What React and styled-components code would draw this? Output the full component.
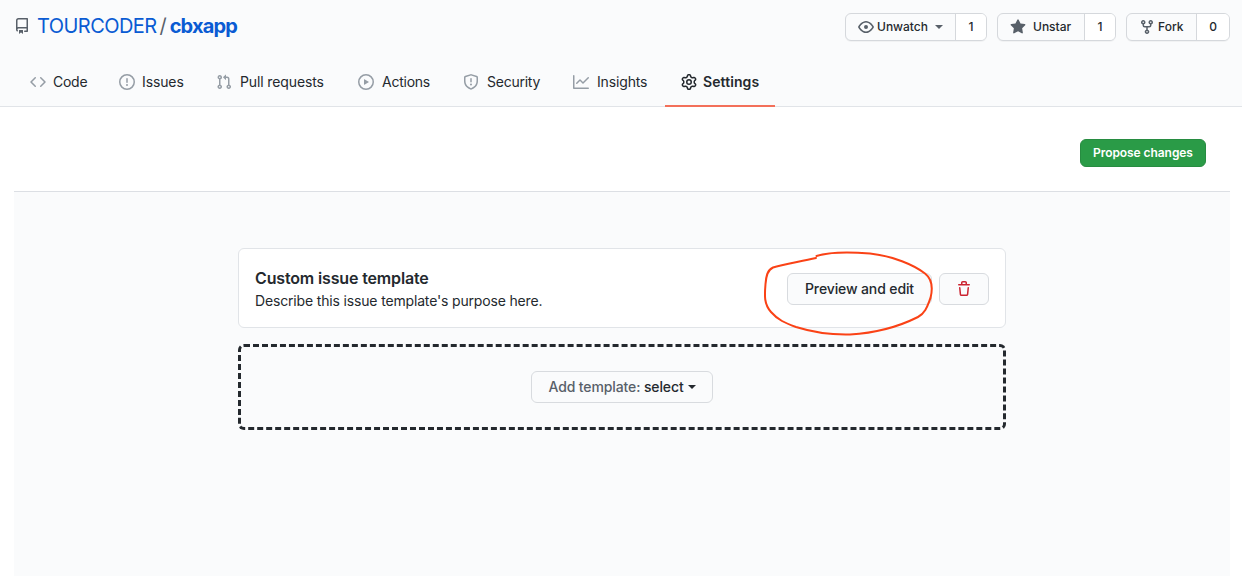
import React from "react";
import styled, { createGlobalStyle } from "styled-components";

const GlobalStyle = createGlobalStyle`
  *, *::before, *::after { box-sizing: border-box; }
  html, body { margin: 0; padding: 0; background: #fff; }
  body {
    font-family: Inter, "Liberation Sans", sans-serif;
    font-size: 14px;
    line-height: 20px;
    color: #24292e;
    overflow: hidden;
  }
  button { font-family: inherit; margin: 0; }
`;

const PATHS = {
  repo: "M2 2.5A2.5 2.5 0 014.5 0h8.75a.75.75 0 01.75.75v12.5a.75.75 0 01-.75.75h-2.5a.75.75 0 110-1.5h1.75v-2h-8a1 1 0 00-.714 1.7.75.75 0 01-1.072 1.05A2.495 2.495 0 012 11.5v-9zm10.5-1V9h-8c-.356 0-.694.074-1 .208V2.5a1 1 0 011-1h8zM5 12.25v3.25a.25.25 0 00.4.2l1.45-1.087a.25.25 0 01.3 0L8.6 15.7a.25.25 0 00.4-.2v-3.25a.25.25 0 00-.25-.25h-3.5a.25.25 0 00-.25.25z",
  code: "M4.72 3.22a.75.75 0 011.06 1.06L2.06 8l3.72 3.72a.75.75 0 11-1.06 1.06L.47 8.53a.75.75 0 010-1.06l4.25-4.25zm6.56 0a.75.75 0 10-1.06 1.06L13.94 8l-3.72 3.72a.75.75 0 101.06 1.06l4.25-4.25a.75.75 0 000-1.06l-4.25-4.25z",
  issue: "M8 1.5a6.5 6.5 0 100 13 6.5 6.5 0 000-13zM0 8a8 8 0 1116 0A8 8 0 010 8zm9 3a1 1 0 11-2 0 1 1 0 012 0zm-.25-6.25a.75.75 0 00-1.5 0v3.5a.75.75 0 001.5 0v-3.5z",
  pull: "M7.177 3.073L9.573.677A.25.25 0 0110 .854v4.792a.25.25 0 01-.427.177L7.177 3.427a.25.25 0 010-.354zM3.75 2.5a.75.75 0 100 1.5.75.75 0 000-1.5zm-2.25.75a2.25 2.25 0 113 2.122v5.256a2.251 2.251 0 11-1.5 0V5.372A2.25 2.25 0 011.5 3.25zM11 2.5h-1V4h1a1 1 0 011 1v5.628a2.251 2.251 0 101.5 0V5A2.5 2.5 0 0011 2.5zm1 10.25a.75.75 0 111.5 0 .75.75 0 01-1.5 0zM3.75 12a.75.75 0 100 1.5.75.75 0 000-1.5z",
  play: "M1.5 8a6.5 6.5 0 1113 0 6.5 6.5 0 01-13 0zM8 0a8 8 0 100 16A8 8 0 008 0zM6.379 5.227A.25.25 0 006 5.442v5.117a.25.25 0 00.379.214l4.264-2.559a.25.25 0 000-.428L6.379 5.227z",
  shield: "M7.467.133a1.75 1.75 0 011.066 0l5.25 1.68A1.75 1.75 0 0115 3.48V7c0 1.566-.32 3.182-1.303 4.682-.983 1.498-2.585 2.813-5.032 3.855a1.7 1.7 0 01-1.33 0c-2.447-1.042-4.049-2.357-5.032-3.855C1.32 10.182 1 8.566 1 7V3.48a1.75 1.75 0 011.217-1.667l5.25-1.68zm.61 1.429a.25.25 0 00-.153 0l-5.25 1.68a.25.25 0 00-.174.238V7c0 1.358.275 2.666 1.057 3.86.784 1.194 2.121 2.34 4.366 3.297a.2.2 0 00.154 0c2.245-.956 3.582-2.104 4.366-3.298C13.225 9.666 13.5 8.36 13.5 7V3.48a.25.25 0 00-.174-.237l-5.25-1.68zM9 10.5a1 1 0 11-2 0 1 1 0 012 0zM7.25 4.75a.75.75 0 011.5 0v3a.75.75 0 01-1.5 0z",
  graph: "M1.5 1.75a.75.75 0 00-1.5 0v12.5c0 .414.336.75.75.75h14.5a.75.75 0 000-1.5H1.5V1.75zm14.28 2.53a.75.75 0 00-1.06-1.06L10 7.94 7.53 5.47a.75.75 0 00-1.06 0L3.22 8.72a.75.75 0 001.06 1.06L7 7.06l2.47 2.47a.75.75 0 001.06 0l5.25-5.25z",
  gear: "M7.429 1.525a6.593 6.593 0 011.142 0c.036.003.108.036.137.146l.289 1.105c.147.56.55.967.997 1.189.174.086.341.183.501.29.417.278.97.423 1.53.27l1.102-.303c.11-.03.175.016.195.046.219.31.41.641.573.989.014.031.022.11-.059.19l-.815.806c-.411.406-.562.957-.53 1.456a4.588 4.588 0 010 .582c-.032.499.119 1.05.53 1.456l.815.806c.08.08.073.159.059.19a6.494 6.494 0 01-.573.99c-.02.029-.086.074-.195.045l-1.103-.303c-.559-.153-1.112-.008-1.529.27-.16.107-.327.204-.5.29-.449.222-.851.628-.998 1.189l-.289 1.105c-.029.11-.101.143-.137.146a6.613 6.613 0 01-1.142 0c-.036-.003-.108-.037-.137-.146l-.289-1.105c-.147-.56-.55-.967-.997-1.189a4.502 4.502 0 01-.501-.29c-.417-.278-.97-.423-1.53-.27l-1.102.303c-.11.03-.175-.016-.195-.046a6.492 6.492 0 01-.573-.989c-.014-.031-.022-.11.059-.19l.815-.806c.411-.406.562-.957.53-1.456a4.587 4.587 0 010-.582c.032-.499-.119-1.05-.53-1.456l-.815-.806c-.08-.08-.073-.159-.059-.19a6.44 6.44 0 01.573-.99c.02-.029.086-.075.195-.045l1.103.303c.559.153 1.112.008 1.529-.27.16-.107.327-.204.5-.29.449-.222.851-.628.998-1.189l.289-1.105c.029-.11.101-.143.137-.146zM8 0c-.236 0-.47.01-.701.03-.743.065-1.29.615-1.458 1.261l-.29 1.106c-.017.066-.078.158-.211.224a5.994 5.994 0 00-.668.386c-.123.082-.233.09-.3.071L3.27 2.776c-.644-.177-1.392.02-1.82.63a7.977 7.977 0 00-.704 1.217c-.315.675-.111 1.422.363 1.891l.815.806c.05.048.098.147.088.294a6.084 6.084 0 000 .772c.01.147-.038.246-.088.294l-.815.806c-.474.469-.678 1.216-.363 1.891.2.428.436.835.704 1.218.428.609 1.176.806 1.82.63l1.103-.303c.066-.019.176-.011.299.071.213.143.436.272.668.386.133.066.194.158.212.224l.289 1.106c.169.646.715 1.196 1.458 1.26a8.094 8.094 0 001.402 0c.743-.064 1.29-.614 1.458-1.26l.29-1.106c.017-.066.078-.158.211-.224a5.98 5.98 0 00.668-.386c.123-.082.233-.09.3-.071l1.102.302c.644.177 1.392-.02 1.82-.63.268-.382.505-.789.704-1.217.315-.675.111-1.422-.364-1.891l-.814-.806c-.05-.048-.098-.147-.088-.294a6.1 6.1 0 000-.772c-.01-.147.039-.246.088-.294l.814-.806c.475-.469.679-1.216.364-1.891a7.992 7.992 0 00-.704-1.218c-.428-.609-1.176-.806-1.82-.63l-1.103.303c-.066.019-.176.011-.299-.071a5.991 5.991 0 00-.668-.386c-.133-.066-.194-.158-.212-.224L10.16 1.29C9.99.645 9.444.095 8.701.031A8.094 8.094 0 008 0zm1.5 8a1.5 1.5 0 11-3 0 1.5 1.5 0 013 0zM11 8a3 3 0 11-6 0 3 3 0 016 0z",
  eye: "M1.679 7.932c.412-.621 1.242-1.75 2.366-2.717C5.175 4.242 6.527 3.5 8 3.5c1.473 0 2.824.742 3.955 1.715 1.124.967 1.954 2.096 2.366 2.717a.119.119 0 010 .136c-.412.621-1.242 1.75-2.366 2.717C10.825 11.758 9.473 12.5 8 12.5c-1.473 0-2.824-.742-3.955-1.715C2.92 9.818 2.09 8.69 1.679 8.068a.119.119 0 010-.136zM8 2c-1.981 0-3.67.992-4.933 2.078C1.797 5.169.88 6.423.43 7.1a1.619 1.619 0 000 1.798c.45.678 1.367 1.932 2.637 3.024C4.329 13.008 6.019 14 8 14c1.981 0 3.67-.992 4.933-2.078 1.27-1.091 2.187-2.345 2.637-3.023a1.619 1.619 0 000-1.798c-.45-.678-1.367-1.932-2.637-3.023C11.671 2.992 9.981 2 8 2zm0 8a2 2 0 100-4 2 2 0 000 4z",
  star: "M8 .25a.75.75 0 01.673.418l1.882 3.815 4.21.612a.75.75 0 01.416 1.279l-3.046 2.97.719 4.192a.75.75 0 01-1.088.791L8 12.347l-3.766 1.98a.75.75 0 01-1.088-.79l.72-4.194L.818 6.374a.75.75 0 01.416-1.28l4.21-.611L7.327.668A.75.75 0 018 .25z",
  fork: "M5 3.25a.75.75 0 11-1.5 0 .75.75 0 011.5 0zm0 2.122a2.25 2.25 0 10-1.5 0v.878A2.25 2.25 0 005.75 8.5h1.5v2.128a2.251 2.251 0 101.5 0V8.5h1.5a2.25 2.25 0 002.25-2.25v-.878a2.25 2.25 0 10-1.5 0v.878a.75.75 0 01-.75.75h-4.5A.75.75 0 015 6.25v-.878zm3.75 7.378a.75.75 0 11-1.5 0 .75.75 0 011.5 0zm3-8.75a.75.75 0 100-1.5.75.75 0 000 1.5z",
  trash: "M6.5 1.75a.25.25 0 01.25-.25h2.5a.25.25 0 01.25.25V3h-3V1.75zm4.5 0V3h2.25a.75.75 0 010 1.5H2.75a.75.75 0 010-1.5H5V1.75C5 .784 5.784 0 6.75 0h2.5C10.216 0 11 .784 11 1.75zM4.496 6.675a.75.75 0 10-1.492.15l.66 6.6A1.75 1.75 0 005.405 15h5.19c.9 0 1.652-.681 1.741-1.576l.66-6.6a.75.75 0 00-1.492-.149l-.66 6.6a.25.25 0 01-.249.225h-5.19a.25.25 0 01-.249-.225l-.66-6.6z",
};

const IconSvg = styled.svg`
  display: block;
  flex: none;
  width: ${(p) => p.$size}px;
  height: ${(p) => p.$size}px;
  fill: ${(p) => p.$color};
`;

const Icon = ({ name, size = 16, color = "#586069" }) => (
  <IconSvg viewBox="0 0 16 16" $size={size} $color={color} aria-hidden="true">
    <path fillRule="evenodd" d={PATHS[name]} />
  </IconSvg>
);

const Page = styled.div`
  display: flex;
  flex-direction: column;
  width: 1242px;
  height: 576px;
  overflow: hidden;
`;

const Header = styled.header`
  flex: none;
  display: flex;
  flex-direction: column;
  justify-content: space-between;
  height: 107px;
  background: #fafbfc;
  border-bottom: 1px solid #e1e4e8;
`;

const TitleBar = styled.div`
  display: flex;
  justify-content: space-between;
  align-items: flex-start;
  padding: 13px 12px 0 14px;
`;

const RepoTitle = styled.h1`
  display: flex;
  align-items: center;
  height: 26px;
  margin: 0;
  font-size: 20px;
  line-height: 26px;
  font-weight: 400;
`;

const Owner = styled.a`
  margin-left: 7px;
  color: #0a5bd3;
  letter-spacing: -0.55px;
`;

const Slash = styled.span`
  width: 13px;
  text-align: center;
  color: #586069;
`;

const RepoName = styled.a`
  color: #0a5bd3;
  font-weight: 700;
  letter-spacing: -0.85px;
`;

const Actions = styled.div`
  display: flex;
  gap: 10px;
`;

const SplitButton = styled.div`
  display: flex;
  height: 28px;
  border: 1px solid #d5d8dc;
  border-radius: 6px;
  overflow: hidden;
  background: #fafbfc;
  font-size: 12px;
  font-weight: 500;
  box-shadow: 0 1px 0 rgba(27, 31, 35, 0.04);
`;

const ActionMain = styled.div`
  display: flex;
  align-items: center;
  width: ${(p) => p.$width}px;
  padding-left: 12px;
  gap: ${(p) => p.$gap}px;
`;

const Count = styled.div`
  display: flex;
  align-items: center;
  justify-content: center;
  width: ${(p) => p.$width}px;
  border-left: 1px solid #d5d8dc;
  background: #fff;
`;

const Caret = styled.span`
  width: 0;
  height: 0;
  margin-left: ${(p) => p.$offset}px;
  border: 4px solid transparent;
  border-bottom-width: 0;
  border-top-color: ${(p) => p.$color};
`;

const Tabs = styled.nav`
  display: flex;
  height: 49px;
  margin-bottom: -1px;
  padding-left: 14px;
`;

const Tab = styled.a`
  display: flex;
  align-items: center;
  gap: ${(p) => p.$gap}px;
  width: ${(p) => p.$width}px;
  padding: 0 0 0 16px;
  border-bottom: 2px solid ${(p) => (p.$active ? "#f3705a" : "transparent")};
  font-weight: ${(p) => (p.$active ? 600 : 400)};
  letter-spacing: ${(p) => p.$spacing}px;
  white-space: nowrap;
`;

const Toolbar = styled.div`
  flex: none;
  display: flex;
  justify-content: flex-end;
  align-items: center;
  height: 85px;
  margin: 0 12px 0 14px;
  padding: 8px 24px 0 0;
  border-bottom: 1px solid #dcdfe4;
`;

const PrimaryButton = styled.button`
  width: 126px;
  height: 28px;
  padding: 0 0 1px;
  border: 1px solid #278c41;
  border-radius: 6px;
  background: #2a9b47;
  color: #fff;
  font-size: 12px;
  font-weight: 600;
  letter-spacing: -0.07px;
`;

const Editor = styled.main`
  flex: 1;
  display: flex;
  flex-direction: column;
  align-items: center;
  gap: 16px;
  margin: 0 12px 0 14px;
  padding-top: 56px;
  background: #fafbfc;
`;

const TemplateCard = styled.section`
  position: relative;
  display: flex;
  align-items: center;
  gap: 7px;
  width: 768px;
  height: 80px;
  padding: 2px 16px 0;
  border: 1px solid #e1e4e8;
  border-radius: 6px;
  background: #fff;
`;

const TemplateText = styled.div`
  flex: 1;
  padding-bottom: 2px;
`;

const TemplateName = styled.h2`
  margin: 0;
  font-size: 16px;
  line-height: 24px;
  font-weight: 600;
  letter-spacing: -0.15px;
`;

const TemplateAbout = styled.p`
  margin: 0;
  line-height: 21px;
  letter-spacing: -0.16px;
`;

const Button = styled.button`
  display: flex;
  align-items: center;
  justify-content: center;
  width: ${(p) => p.$width}px;
  height: 32px;
  padding: 0 0 1px;
  border: 1px solid #d8dbdf;
  border-radius: 6px;
  background: #fafbfc;
  color: #24292e;
  font-size: 14px;
  font-weight: 500;
  letter-spacing: -0.12px;
  white-space: pre;
`;

const MutedLabel = styled.span`
  color: #586069;
`;

const AddTemplate = styled.section`
  display: flex;
  align-items: center;
  justify-content: center;
  width: 768px;
  height: 86px;
  border: 3px dashed #24292e;
  border-radius: 6px;
`;

const Annotation = styled.svg`
  position: absolute;
  left: 521px;
  top: -1px;
  width: 180px;
  height: 92px;
  fill: none;
  stroke: #fa4216;
  stroke-width: 2;
  stroke-linecap: round;
  stroke-linejoin: round;
  pointer-events: none;
`;

const TABS = [
  { icon: "code", label: "Code", width: 89, gap: 7, spacing: -0.25 },
  { icon: "issue", label: "Issues", width: 97, gap: 7, spacing: -0.12 },
  { icon: "pull", label: "Pull requests", width: 142, gap: 8, spacing: -0.12 },
  { icon: "play", label: "Actions", width: 105, gap: 8, spacing: -0.25 },
  { icon: "shield", label: "Security", width: 110, gap: 8, spacing: -0.25 },
  { icon: "graph", label: "Insights", width: 108, gap: 8, spacing: -0.15 },
  { icon: "gear", label: "Settings", width: 110, gap: 6, spacing: 0.08, active: true },
];

export default function App() {
  return (
    <Page>
      <GlobalStyle />
      <Header>
        <TitleBar>
          <RepoTitle>
            <Icon name="repo" />
            <Owner>TOURCODER</Owner>
            <Slash>/</Slash>
            <RepoName>cbxapp</RepoName>
          </RepoTitle>
          <Actions>
            <SplitButton>
              <ActionMain $width={109} $gap={3}>
                <Icon name="eye" />
                <span>Unwatch</span>
                <Caret $offset={4} $color="#586069" />
              </ActionMain>
              <Count $width={31}>1</Count>
            </SplitButton>
            <SplitButton>
              <ActionMain $width={86} $gap={7}>
                <Icon name="star" />
                <span>Unstar</span>
              </ActionMain>
              <Count $width={31}>1</Count>
            </SplitButton>
            <SplitButton>
              <ActionMain $width={69} $gap={3}>
                <Icon name="fork" />
                <span>Fork</span>
              </ActionMain>
              <Count $width={33}>0</Count>
            </SplitButton>
          </Actions>
        </TitleBar>
        <Tabs>
          {TABS.map((t) => (
            <Tab key={t.label} $width={t.width} $gap={t.gap} $spacing={t.spacing} $active={t.active}>
              <Icon name={t.icon} color={t.active ? "#24292e" : "#959da5"} />
              {t.label}
            </Tab>
          ))}
        </Tabs>
      </Header>
      <Toolbar>
        <PrimaryButton>Propose changes</PrimaryButton>
      </Toolbar>
      <Editor>
        <TemplateCard>
          <TemplateText>
            <TemplateName>Custom issue template</TemplateName>
            <TemplateAbout>Describe this issue template's purpose here.</TemplateAbout>
          </TemplateText>
          <Button $width={145}>Preview and edit</Button>
          <Button $width={50} aria-label="Delete template">
            <Icon name="trash" color="#cb2431" />
          </Button>
          <Annotation viewBox="760 248 180 92">
            <path d="M816 258C798 262 782 265 773 267.5C767 270 766 277 765.5 284C764.5 296 764 304 771 312C778 320 785 323 796 327C812 332 830 335 850 334.5C876 333 898 327 918 317C926 313 928 304 930.5 298C933 288 932 279 925 273.5C914 265 893 256 870 253.5C850 252 829 252 816.5 256" />
          </Annotation>
        </TemplateCard>
        <AddTemplate>
          <Button $width={182}>
            <MutedLabel>Add template: </MutedLabel>
            <span>select</span>
            <Caret $offset={4} $color="#24292e" />
          </Button>
        </AddTemplate>
      </Editor>
    </Page>
  );
}
